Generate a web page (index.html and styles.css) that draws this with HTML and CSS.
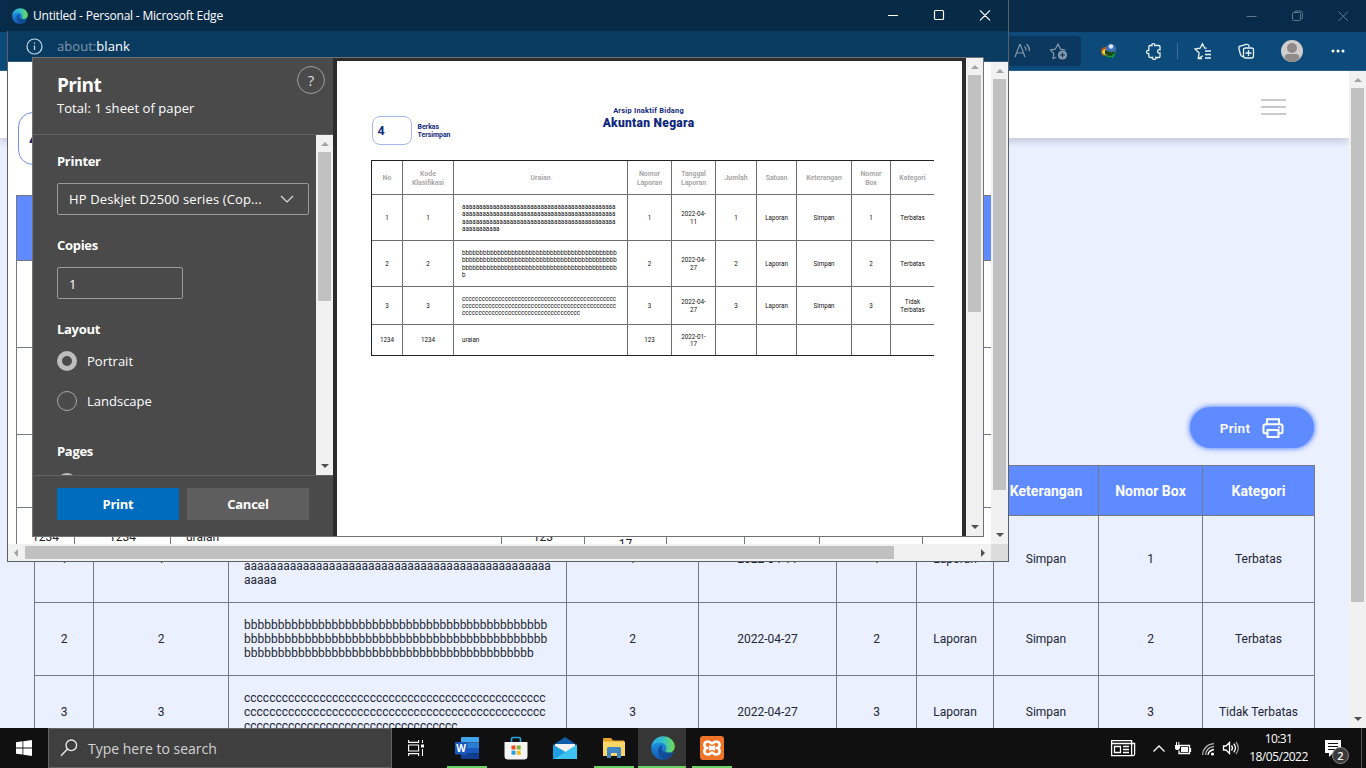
FILE: index.html
```html
<!DOCTYPE html>
<html lang="id">
<head>
<meta charset="utf-8">
<title>Untitled - Personal - Microsoft Edge</title>
<link rel="stylesheet" href="styles.css">
</head>
<body>
<svg class="defs" width="0" height="0">
  <defs>
    <linearGradient id="eg1" x1="0" y1="0" x2="1" y2="0"><stop offset="0" stop-color="#2aa8e6"/><stop offset=".5" stop-color="#35c1c8"/><stop offset="1" stop-color="#6fdd52"/></linearGradient>
    <linearGradient id="eg2" x1="0" y1="0" x2="0" y2="1"><stop offset="0" stop-color="#1d9be6"/><stop offset="1" stop-color="#1257b4"/></linearGradient>
    <linearGradient id="eg3" x1="0" y1="0" x2="1" y2="1"><stop offset="0" stop-color="#0f4fa0"/><stop offset="1" stop-color="#134a8e"/></linearGradient>
    <symbol id="edge" viewBox="0 0 24 24">
      <path fill="url(#eg2)" d="M.3 11C1 5 6 3.500 10 5c4 1.500 6 4 5.500 7-.3 1.600-1.500 2-1.300 3 .4 1.700 5 2.500 8.300.8-1.700 5-6 8-10.500 8C5 23.800-.4 18 .3 11z"/>
      <path fill="url(#eg3)" d="M9.500 9.500c-4 3.500-3.500 10.500 3.500 14.200 4.500-.3 8-3.200 9.500-7.900-4 2.200-10 1.500-11.500-1.800-.7-1.800.2-3.300 1-4.300-1-.6-1.800-.6-2.500-.2z"/>
      <path fill="url(#eg1)" d="M.3 11C1.200 4.500 6 .2 12 .2c7 0 11.800 5 11.800 10.300 0 4.500-3.300 6.200-6.300 6-2.500-.2-3.700-1.200-3-2.200 1.300-1.700 1.300-4-.7-5.800C10.300 5.400 3.500 5.800.3 11z"/>
    </symbol>
  </defs>
</svg>
<div class="desktop">

  <section class="browser">
    <div class="titlebar">
      <svg width="120" height="32" viewBox="1246 0 120 32" fill="none" stroke="#5f7890"><path d="M1246.500 16.500h10M1292.500 13.500q0-1 1-1h6q1 0 1 1v6q0 1-1 1h-6q-1 0-1-1zM1294.500 12.500q0-1.500 1.500-1.500h4q2.500 0 2.500 2.500v4q0 1.500-1.500 1.500M1338.500 11.500l9.500 9.500M1348 11.500l-9.500 9.500"/></svg>
    </div>
    <div class="toolbar">
      <div class="omnibox">
        <svg width="66" height="30" viewBox="1010 36 66 30" fill="none" stroke="#8799aa" stroke-width="1.200"><path d="M1015 57l4.700-12.500h.6l4.700 12.500M1016.500 53h7M1024.500 46.500q1.500 1.500 1.500 4M1026.500 44q3 2.500 3 7M1056.300 57.200l-3.300 1.300.8-5-3.300-3.500 4.700-.8 2.800-5.200 2.500 5.200 5 .8"/><circle cx="1062.500" cy="55" r="4.600" fill="#8799aa" stroke="none"/><path d="M1060 55h5M1062.500 52.500v5" stroke="#0a365b"/></svg>
      </div>
      <svg class="tools" width="285" height="39" viewBox="1081 32 285 39" fill="none" stroke="#e9f1f8" stroke-width="1.300">
        <g stroke="none"><ellipse cx="1105" cy="51.500" rx="4" ry="4.500" fill="#b8541c"/><ellipse cx="1106" cy="52" rx="3.800" ry="2.800" fill="#f3d33d"/><circle cx="1111" cy="49" r="5.200" fill="#3f6fb4"/><circle cx="1111" cy="46.500" r="2.200" fill="#d8e8f5"/><path d="M1101 52q4 5 10 3l-2-3 7 0-3 6-2-1q-6 1-10-5z" fill="#159b32"/><path d="M1105 50l6 2.500 5-1-5 4.500-6-2z" fill="#1b4415"/></g>
        <path d="M1149.500 45.500h2.500c-.8-2.600 3.500-2.600 2.800 0h4.200q1 0 1 1v3.300c-3.200-.8-3.200 4 0 3.200v3.500q0 1-1 1h-3.200c.8 2.600-4 2.600-3.200 0h-2.300q-1.500 0-1.500-1.200v-2.800c-3 .8-3-3.800 0-3v-3.500q0-1.500 1.200-1.500z"/>
        <path d="M1177.500 43v16" stroke="#3c6e98" stroke-width="1"/>
        <path d="M1202 58.500l-3.800 0 .9-5.500-4-4 5-.8 2.300-4.600 2.300 4.600h2M1205 51h6M1205 54.500h6M1205 58h6M1198.200 58.500l4.800-2.800"/>
        <path d="M1243 56.500q-2 0-2.500-2l-1.600-6q-.5-2 1.500-2.500l5.600-1.600q2.500-.5 3 1.500v1M1245.500 48h6q2 0 2 2v6q0 2-2 2h-6q-2 0-2-2v-6q0-2 2-2zM1248.500 50v6M1245.500 53h6"/>
        <circle cx="1292" cy="51" r="11" fill="#d0cecc" stroke="none"/><circle cx="1292" cy="48" r="5" fill="#8f8a87" stroke="none"/><path d="M1284.500 58q0-4 4-4h7q4 0 4 4-3 4-7.500 4t-7.500-4z" fill="#8f8a87" stroke="none"/>
        <g fill="#fff" stroke="none"><circle cx="1333" cy="51" r="1.500"/><circle cx="1338" cy="51" r="1.500"/><circle cx="1343" cy="51" r="1.500"/></g>
      </svg>
    </div>
    <div class="viewport">
      <main class="page">
        <header class="nav"><span class="burger"><i></i><i></i><i></i></span></header>
        <div class="actions">
          <a class="print-btn">Print
            <svg width="22" height="20" viewBox="0 0 22 20" fill="none" stroke="#fff" stroke-width="2"><path d="M5 6V1.200h12V6M5 15.200H2.500q-1 0-1-1V8.500q0-2.300 2.300-2.300h14.400q2.300 0 2.300 2.300v5.700q0 1-1 1H17M5.500 12h11v7h-11z"/><circle cx="17" cy="9.500" r="1" fill="#fff" stroke="none"/></svg>
          </a>
        </div>
        <div class="grid main-grid">
          <b>No</b><b>Kode Klasifikasi</b><b>Uraian</b><b>Nomor Laporan</b><b>Tanggal Laporan</b><b>Jumlah</b><b>Satuan</b><b>Keterangan</b><b>Nomor Box</b><b>Kategori</b>
          <p>1</p><p>1</p><p class="desc">aaaaaaaaaaaaaaaaaaaaaaaaaaaaaaaaaaaaaaaaaaaaaaa<br>aaaaaaaaaaaaaaaaaaaaaaaaaaaaaaaaaaaaaaaaaaaaaaa<br>aaaaaaaaaaaaaaaaaaaaaaaaaaaaaaaaaaaaaaaaaaaaaaa<br>aaaaa</p><p>1</p><p>2022-04-11</p><p>1</p><p>Laporan</p><p>Simpan</p><p>1</p><p>Terbatas</p>
          <p>2</p><p>2</p><p class="desc">bbbbbbbbbbbbbbbbbbbbbbbbbbbbbbbbbbbbbbbbbbbbb<br>bbbbbbbbbbbbbbbbbbbbbbbbbbbbbbbbbbbbbbbbbbbbb<br>bbbbbbbbbbbbbbbbbbbbbbbbbbbbbbbbbbbbbbbbbbb</p><p>2</p><p>2022-04-27</p><p>2</p><p>Laporan</p><p>Simpan</p><p>2</p><p>Terbatas</p>
          <p>3</p><p>3</p><p class="desc">cccccccccccccccccccccccccccccccccccccccccccccccc<br>cccccccccccccccccccccccccccccccccccccccccccccccc<br>cccccccccccccccccccccccccccccccccc</p><p>3</p><p>2022-04-27</p><p>3</p><p>Laporan</p><p>Simpan</p><p>3</p><p>Tidak Terbatas</p>
        </div>
      </main>
      <div class="sb"><i class="up"></i><span class="thumb t-main"></span><i class="down"></i></div>
    </div>
  </section>

  <section class="popup">
    <div class="p-title">
      <svg width="16" height="16"><use href="#edge"/></svg>
      <span class="p-name">Untitled - Personal - Microsoft Edge</span>
      <svg class="p-ctl" width="110" height="31" viewBox="888 0 110 31" fill="none" stroke="#fff" stroke-width="1.200"><path d="M888 15.500h10M935.500 10.500h7q1 0 1 1v7q0 1-1 1h-7q-1 0-1-1v-7q0-1 1-1zM980 10.300l10 10M990 10.300l-10 10"/></svg>
    </div>
    <div class="p-addr">
      <svg width="17" height="17" viewBox="0 0 17 17" fill="none" stroke="#c5d9ea" stroke-width="1.200"><circle cx="8.500" cy="8.500" r="7.500"/><path d="M8.500 7.500v4.500M8.500 4.500v1.300"/></svg>
      <span class="url"><em>about:</em>blank</span>
    </div>
    <div class="p-view">
      <div class="p-page">
        <div class="count-box">4</div>
        <div class="grid pop-grid">
          <b></b><b></b><b></b><b></b><b></b><b></b><b></b><b></b><b></b><b></b>
          <p></p><p></p><p></p><p></p><p></p><p></p><p></p><p></p><p></p><p></p>
          <p></p><p></p><p></p><p></p><p></p><p></p><p></p><p></p><p></p><p></p>
          <p></p><p></p><p></p><p></p><p></p><p></p><p></p><p></p><p></p><p></p>
          <p>1234</p><p>1234</p><p class="desc">uraian</p><p>123</p><p>2022-01-<br>17</p><p></p><p></p><p></p><p></p><p></p>
        </div>
      </div>
      <div class="sb"><i class="up"></i><span class="thumb t-pop"></span><i class="down"></i></div>
    </div>
    <div class="hsb"><i class="left"></i><span class="hthumb"></span><i class="right"></i><span class="corner"></span></div>

    <div class="dialog">
      <div class="panel">
        <div class="d-head">
          <div><h1>Print</h1><div class="total">Total: 1 sheet of paper</div></div>
          <span class="help">?</span>
        </div>
        <div class="d-body">
          <div class="form">
            <h2>Printer</h2>
            <div class="select"><span>HP Deskjet D2500 series (Cop...</span><svg width="14" height="9" viewBox="0 0 14 9" fill="none" stroke="#ddd" stroke-width="1.200"><path d="M1 1l6 6 6-6"/></svg></div>
            <h2 class="h-copies">Copies</h2>
            <div class="input">1</div>
            <h2 class="h-layout">Layout</h2>
            <div class="radio"><i class="on"></i>Portrait</div>
            <div class="radio r2"><i></i>Landscape</div>
            <h2 class="h-pages">Pages</h2>
            <div class="radio r3"><i class="on"></i></div>
          </div>
          <div class="sb"><i class="up"></i><span class="thumb t-form"></span><i class="down"></i></div>
        </div>
        <div class="d-foot"><span class="btn primary">Print</span><span class="btn">Cancel</span></div>
      </div>
      <div class="preview">
        <div class="sheet">
          <div class="doc-head">
            <div class="doc-count"><span class="doc-num">4</span><span>Berkas<br>Tersimpan</span></div>
            <div class="doc-title"><small>Arsip Inaktif Bidang</small><strong>Akuntan Negara</strong></div>
          </div>
          <div class="grid doc-grid">
            <b>No</b><b>Kode<br>Klasifikasi</b><b>Uraian</b><b>Nomor<br>Laporan</b><b>Tanggal<br>Laporan</b><b>Jumlah</b><b>Satuan</b><b>Keterangan</b><b>Nomor<br>Box</b><b>Kategori</b>
            <p>1</p><p>1</p><p class="desc">aaaaaaaaaaaaaaaaaaaaaaaaaaaaaaaaaaaaaaaaaaaaa<br>aaaaaaaaaaaaaaaaaaaaaaaaaaaaaaaaaaaaaaaaaaaaa<br>aaaaaaaaaaaaaaaaaaaaaaaaaaaaaaaaaaaaaaaaaaaaa<br>aaaaaaaaaaa</p><p>1</p><p>2022-04-<br>11</p><p>1</p><p>Laporan</p><p>Simpan</p><p>1</p><p>Terbatas</p>
            <p>2</p><p>2</p><p class="desc">bbbbbbbbbbbbbbbbbbbbbbbbbbbbbbbbbbbbbbbbbbbb<br>bbbbbbbbbbbbbbbbbbbbbbbbbbbbbbbbbbbbbbbbbbbb<br>bbbbbbbbbbbbbbbbbbbbbbbbbbbbbbbbbbbbbbbbbbbb<br>b</p><p>2</p><p>2022-04-<br>27</p><p>2</p><p>Laporan</p><p>Simpan</p><p>2</p><p>Terbatas</p>
            <p>3</p><p>3</p><p class="desc">ccccccccccccccccccccccccccccccccccccccccccccccc<br>ccccccccccccccccccccccccccccccccccccccccccccccc<br>cccccccccccccccccccccccccccccccccccc</p><p>3</p><p>2022-04-<br>27</p><p>3</p><p>Laporan</p><p>Simpan</p><p>3</p><p>Tidak<br>Terbatas</p>
            <p>1234</p><p>1234</p><p class="desc">uraian</p><p>123</p><p>2022-01-<br>17</p><p></p><p></p><p></p><p></p><p></p>
          </div>
        </div>
      </div>
      <div class="sb"><i class="up"></i><span class="thumb t-prev"></span><i class="down"></i></div>
    </div>
  </section>

  <footer class="taskbar">
    <div class="start"><svg width="16" height="16" viewBox="0 0 16 16" fill="#fff"><path d="M0 2.200l6.500-.9v6.200H0zM7.300 1.200L16 0v7.500H7.300zM0 8.400h6.500v6.200L0 13.700zM7.300 8.400H16V16l-8.700-1.200z"/></svg></div>
    <div class="search"><svg width="18" height="18" viewBox="0 0 18 18" fill="none" stroke="#eee" stroke-width="1.300"><circle cx="11.300" cy="6.300" r="5.300"/><path d="M7.500 10L1 16.800"/></svg><span>Type here to search</span></div>
    <div class="task view"><svg width="16" height="16" viewBox="0 0 16 16" fill="none" stroke="#fff" stroke-width="1.100"><path d="M.6 0v2.400h10V0M.6 16v-2.400h10V16M.6 5h10v6H.6zM14.500 0v3M14.500 9v7"/><path d="M13 4.500h3v3h-3z" fill="#fff" stroke="none"/></svg></div>
    <div class="task run"><svg width="24" height="22" viewBox="0 0 24 22"><path fill="#41a5ee" d="M6 1q0-1 1-1h16q1 0 1 1v4.500H6z"/><path fill="#2b7cd3" d="M6 5.500h18V11H6z"/><path fill="#185abd" d="M6 11h18v5.500H6z"/><path fill="#103f91" d="M6 16.500h18V21q0 1-1 1H7q-1 0-1-1z"/><rect y="5" width="12.500" height="12.500" rx="1" fill="#185abd"/><text x="6.200" y="14.800" class="logo-w" text-anchor="middle">W</text></svg></div>
    <div class="task"><svg width="24" height="24" viewBox="0 0 24 24"><path d="M7.500 6V3q0-1.500 1.500-1.500h6q1.500 0 1.500 1.500v3" fill="none" stroke="#2aa3dc" stroke-width="1.600"/><path fill="#f4f4f4" d="M.5 6h23v14q0 3.500-3.500 3.500H4Q.5 23.500.5 20z"/><path fill="#e8502a" d="M7.500 9.500h4v4h-4z"/><path fill="#7cb82f" d="M12.700 9.500h4v4h-4z"/><path fill="#249fe0" d="M7.500 14.700h4v4h-4z"/><path fill="#f8b81c" d="M12.700 14.700h4v4h-4z"/></svg></div>
    <div class="task"><svg width="24" height="22" viewBox="0 0 24 22"><path fill="#0f5ca8" d="M0 8L12 0l12 8v6H0z"/><path fill="#f3f3f3" d="M2 7h20v8H2z"/><path fill="#1b8fdb" d="M0 7.500L14 17 24 22H0z"/><path fill="#3cc3f2" d="M24 7.500V22H1z"/><path fill="#1f9fe2" d="M0 8v14l12-7.500z"/></svg></div>
    <div class="task run"><svg width="22" height="20" viewBox="0 0 22 20"><path fill="#e3a32b" d="M0 1q0-1 1-1h7l2 2.500h11v4H0z"/><path fill="#fbd566" d="M0 3.500h22V18H0z"/><path fill="#3f86c4" d="M4 10.500q0-1.500 1.500-1.500h11q1.500 0 1.500 1.500V20h-4v-5H8v5H4z"/></svg></div>
    <div class="task run active"><svg width="24" height="24"><use href="#edge"/></svg></div>
    <div class="task run"><svg width="24" height="24" viewBox="0 0 24 24"><rect width="24" height="24" rx="3" fill="#f07427"/><path d="M8 5.500c-4.500 0-4.500 5-1.500 6.500-3 1.500-3 6.500 1.500 6.500 2.500 0 2.500-2 4-2s1.500 2 4 2c4.500 0 4.500-5 1.500-6.500 3-1.500 3-6.500-1.500-6.500-2.500 0-2.500 2-4 2s-1.500-2-4-2z" fill="none" stroke="#fff" stroke-width="2.600"/><path d="M9 10l6 4M15 10l-6 4" stroke="#fff" stroke-width="2.600"/></svg></div>
    <div class="tray">
      <svg width="136" height="40" viewBox="1107 728 136 40" fill="none" stroke="#fff" stroke-width="1.300"><path d="M1111.600 740.600h20v15h-20zM1131.600 743.500h3v10.500q0 1.600-1.500 1.600h-2M1111.600 743.500h20M1114.500 746.500h6v6h-6zM1123 746.500h6M1123 749.500h6M1123 752.500h6"/><path d="M1153.500 751.500l5.500-5.500 5.500 5.500"/><path d="M1179 745.500h10.500v8h-10.500v-3M1190.500 748v4"/><path fill="#fff" stroke="none" d="M1181 747h7v5h-7zM1175 745h5v3q-1 2-2 2h-1q-2 0-2-2zM1176 742h1v3h-1zM1178.300 742h1v3h-1z"/><path stroke="#aaa" d="M1202.500 755q1-10.500 11.500-11.500M1205.500 755q.5-7.500 8.500-8.500"/><path d="M1208 755q.5-4.500 6-5.500"/><circle cx="1212.500" cy="754" r="1.600" fill="#fff" stroke="none"/><path d="M1223.500 746h2.500l3.500-3.500v11l-3.500-3.500h-2.500zM1231.500 745.500q2 2.500 0 5M1233.700 743.700q3.500 4.300 0 8.600"/><path stroke="#999" d="M1236 742q4.500 6 0 12"/></svg>
      <div class="clock"><span>10:31</span><span class="date">18/05/2022</span></div>
      <svg class="notif" width="26" height="28" viewBox="1324 738 26 28"><path fill="#fff" d="M1325 740h16v13h-8l-4 4v-4h-4z"/><path stroke="#111" d="M1328 743.500h10M1328 746.500h10M1328 749.500h7"/><circle cx="1340.500" cy="755.500" r="8" fill="#3b3b3b" stroke="#8a8a8a"/><text x="1340.500" y="759.500" class="badge" text-anchor="middle">2</text></svg>
    </div>
  </footer>
</div>
</body>
</html>
```
FILE: styles.css
```css
* { box-sizing: border-box; }
body { margin: 0; font-family: "Open Sans", "Noto Sans", sans-serif; }
h1, h2, p { margin: 0; }
svg { display: block; flex: none; }
.defs { position: absolute; }
.desktop { position: relative; width: 1366px; height: 768px; overflow: hidden; display: flex; flex-direction: column; }

/* Browser window behind */
.browser { height: 728px; display: flex; flex-direction: column; }
.titlebar { height: 32px; background: #072b48; display: flex; justify-content: flex-end; }
.toolbar { height: 39px; background: #0c4a7a; display: flex; justify-content: flex-end; align-items: center; border-bottom: 1px solid #2e628c; }
.omnibox { width: 700px; height: 30px; background: #0a385f; border-radius: 4px; display: flex; justify-content: flex-end; padding-right: 5px; }
.tools { margin-top: 1px; }
.viewport { height: 657px; display: flex; overflow: hidden; }
.page { width: 1349px; height: 657px; overflow: hidden; background: #ebf0ff; font-family: Roboto, sans-serif; }
.nav { height: 67px; background: #fff; box-shadow: 0 3px 8px rgba(90, 95, 120, .3); display: flex; justify-content: flex-end; padding: 28px 63px 0 0; }
.burger { width: 25px; display: flex; flex-direction: column; gap: 5px; }
.burger i { height: 2px; background: #cacaca; }
.actions { height: 327px; display: flex; justify-content: flex-end; align-items: flex-end; padding: 0 35px 17px 0; }
.print-btn { width: 124px; height: 41px; border-radius: 21px; background: #5e8bff; box-shadow: 0 0 5px 1px #5e8bff; color: #fff; font-size: 13.500px; font-weight: 600; letter-spacing: .3px; display: flex; align-items: center; justify-content: center; gap: 12px; }

/* Bordered data grids */
.grid { display: grid; border: solid #747985; border-width: 1px 0 0 1px; }
.grid > * { border: solid #747985; border-width: 0 1px 1px 0; display: flex; align-items: center; justify-content: center; text-align: center; white-space: nowrap; overflow: hidden; }
.grid > .desc { justify-content: flex-start; text-align: left; padding-left: 15px; }
.main-grid { width: 1281px; margin-left: 34px; grid-template-columns: 59px 135px 338px 132px 138px 80px 77px 105px 104px 112px; grid-template-rows: 50px 87px 73px 73px; font-size: 12px; line-height: 14px; color: #222733; }
.main-grid b { background: #5e8bff; color: #fff; font-size: 14px; letter-spacing: .05px; }

/* Scrollbars */
.sb { width: 17px; flex: none; background: #f1f1f1; display: flex; flex-direction: column; align-items: center; }
.sb i { width: 0; height: 0; border: 4px solid transparent; }
.sb .up { border-top: 0; border-bottom-color: #a3a3a3; margin: 7px 0 6px; }
.sb .down { border-bottom: 0; border-top-color: #505050; margin: auto 0 7px; }
.thumb { width: 13px; background: #c1c1c1; }
.t-main { height: 514px; }
.t-pop { height: 411px; }
.t-form { height: 149px; }
.t-prev { height: 237px; }

/* Popup window */
.popup { position: absolute; left: 7px; top: 0; width: 1002px; height: 562px; border: 1px solid #5b6067; border-top: 0; display: flex; flex-direction: column; background: #fff; }
.p-title { height: 31px; margin-left: -1px; background: #072a47; display: flex; align-items: center; padding-left: 5px; color: #fff; font-size: 12px; flex: none; }
.p-name { margin-left: 5px; letter-spacing: -.2px; }
.p-ctl { margin-left: auto; margin-right: 10px; }
.p-addr { height: 31px; background: #093b61; border-bottom: 1px solid #31597a; display: flex; align-items: center; padding-left: 18px; gap: 14px; color: #fff; font-size: 13px; letter-spacing: .05px; flex: none; }
.url em { font-style: normal; color: #8296a8; }
.p-view { height: 482px; display: flex; overflow: hidden; }
.p-page { width: 983px; height: 482px; overflow: hidden; padding: 50px 0 0 8px; font-family: Roboto, sans-serif; }
.count-box { width: 80px; height: 53px; border: 1px solid #6f8fee; border-radius: 15px; margin: 0 0 30px 2px; padding: 14px 0 0 10px; color: #16247a; font-size: 20px; font-weight: 700; line-height: 24px; }
.pop-grid { width: 1041px; grid-template-columns: 58px 96px 331px 83px 82px 78px 75px 103px 68px 66px; grid-template-rows: 65px 87px 87px 73px 58px; font-size: 12px; line-height: 14px; color: #222; }
.pop-grid b { background: #5e8bff; }
.pop-grid > :nth-child(10n+9) { border-right: 0; }
.hsb { height: 17px; background: #f1f1f1; display: flex; align-items: center; }
.hsb i { width: 0; height: 0; border: 4px solid transparent; }
.hsb .left { border-left: 0; border-right-color: #a3a3a3; margin: 0 7px 0 6px; }
.hsb .right { border-right: 0; border-left-color: #505050; margin: 0 6px 0 auto; }
.hthumb { width: 869px; height: 13px; background: #c1c1c1; }
.corner { width: 17px; height: 17px; background: #dcdcdc; }

/* Print dialog */
.dialog { position: absolute; left: 24px; top: 57px; width: 952px; height: 480px; border: 1px solid #6f7174; display: flex; color: #fff; background: #4a4a4a; }
.panel { width: 300px; flex: none; display: flex; flex-direction: column; background: #4a4a4a; }
.d-head { height: 77px; border-bottom: 1px solid #626262; display: flex; justify-content: space-between; padding: 8px 8px 0 24px; }
.d-head h1 { font-size: 19px; line-height: 26px; font-weight: 700; letter-spacing: -.6px; margin-top: 6px; }
.total { font-size: 13px; line-height: 18px; margin-top: 1px; letter-spacing: .07px; }
.help { width: 28px; height: 28px; border: 1px solid #a0a0a0; border-radius: 50%; font-size: 15px; line-height: 26px; text-align: center; color: #ddd; }
.d-body { height: 340px; display: flex; }
.form { width: 283px; height: 340px; overflow: hidden; padding: 16px 0 0 24px; font-size: 13px; }
.form h2 { font-size: 13px; line-height: 20px; font-weight: 700; letter-spacing: -.3px; }
.select { width: 252px; height: 32px; margin-top: 12px; border: 1px solid #9a9a9a; border-radius: 2px; display: flex; align-items: center; justify-content: space-between; padding: 0 14px 0 11px; letter-spacing: .13px; white-space: nowrap; }
.form .h-copies { margin-top: 20px; }
.input { width: 126px; height: 32px; margin-top: 12px; border: 1px solid #9a9a9a; border-radius: 2px; padding-left: 11px; line-height: 32px; }
.form .h-layout { margin-top: 20px; }
.radio { display: flex; align-items: center; gap: 10px; height: 20px; margin-top: 12px; }
.radio i { width: 20px; height: 20px; border-radius: 50%; border: 1px solid #a8a8a8; }
.radio .on { border: 5px solid #bdbdbd; }
.r2 { margin-top: 20px; }
.form .h-pages { margin-top: 30px; }
.d-foot { height: 61px; border-top: 1px solid #626262; display: flex; gap: 8px; padding: 12px 0 0 24px; }
.btn { width: 122px; height: 32px; background: #5e5e5e; font-size: 13px; font-weight: 700; letter-spacing: -.25px; line-height: 32px; text-align: center; }
.btn.primary { background: #006cbe; }
.preview { width: 633px; flex: none; background: #2d2b2c; padding: 3px 4px 0 4px; }
.sheet { height: 475px; background: #fff; overflow: hidden; padding: 44px 28px 0 34px; font-family: Roboto, sans-serif; }
.doc-head { height: 55px; display: flex; color: #0f2a7c; font-weight: 700; }
.doc-count { width: 232px; display: flex; gap: 6px; padding: 11px 0 0 1px; margin-left: -.5px; font-size: 6.900px; line-height: 8px; }
.doc-count span:last-child { padding-top: 7px; }
.doc-num { width: 40px; height: 29px; border: 1px solid #a5b8f5; border-radius: 8px; font-size: 12.500px; line-height: 27px; padding-left: 5px; }
.doc-title { width: 92px; padding-top: 1px; display: flex; flex-direction: column; align-items: center; white-space: nowrap; }
.doc-title small { font-size: 7.400px; line-height: 10px; letter-spacing: .25px; }
.doc-title strong { font-size: 12px; line-height: 15px; letter-spacing: .3px; }
.doc-grid { width: 563px; border-color: #222; border-bottom: 1px solid #222; grid-template-columns: 31px 51px 174px 44px 44px 41px 40px 55px 39px 43px; grid-template-rows: 34px 46px 46px 38px 30px; font-size: 6.280px; line-height: 7.300px; color: #111; font-weight: 400; }
.doc-grid > * { border-color: #6e6e6e; padding-top: 2px; }
.doc-grid > :nth-child(10n) { border-right: 0; }
.doc-grid > :nth-child(n+41) { border-bottom: 0; }
.doc-grid b { color: #a8a8a8; font-size: 6.900px; line-height: 9px; }
.doc-grid > .desc { padding-left: 8px; }

/* Taskbar */
.taskbar { height: 40px; background: #101010; display: flex; color: #fff; }
.start { width: 48px; display: flex; align-items: center; justify-content: center; }
.search { width: 344px; height: 40px; background: #3f3f3f; border: 1px solid #636363; display: flex; align-items: center; gap: 10px; padding-left: 11px; color: #d4d4d4; font-size: 14px; }
.task { width: 49px; height: 40px; display: flex; align-items: center; justify-content: center; }
.view { width: 48px; margin-right: 2px; }
.run { background: linear-gradient(#68d364, #68d364) 5px 38px / 40px 2px no-repeat; }
.active { background: linear-gradient(#68d364, #68d364) 0 38px / 48px 2px no-repeat, linear-gradient(#363636, #363636) 0 0 / 48px 40px no-repeat; }
.logo-w { font: 700 10px "Open Sans", sans-serif; fill: #fff; }
.tray { margin-left: auto; display: flex; border-right: 1px solid #555; margin-right: 4px; }
.clock { width: 71px; display: flex; flex-direction: column; align-items: center; font-size: 12px; line-height: 18px; padding-top: 2px; letter-spacing: -.6px; }
.date { letter-spacing: -.5px; }
.notif { margin: 10px 11px 0 10px; }
.badge { font: 600 11px "Open Sans", sans-serif; fill: #fff; }
```
